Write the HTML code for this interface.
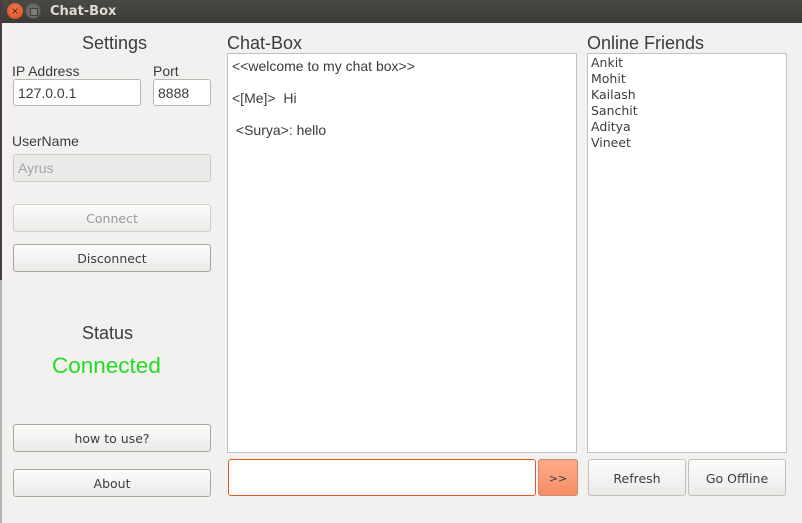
<!DOCTYPE html>
<html><head><style>
*{margin:0;padding:0;box-sizing:border-box}
body{width:802px;height:523px;background:#f2f1f0;position:relative;overflow:hidden;font-family:"Liberation Sans",sans-serif;color:#3c3c3c}
.a{position:absolute}
.strip1{left:0;top:0;width:2px;height:280px;background:#4a3a45}
.strip2{left:0;top:280px;width:2px;height:243px;background:#b5b3b0}
.title{left:2px;top:0;width:800px;height:23px;background:linear-gradient(#4a4944,#3c3b37);color:#dfdbd2;font-weight:bold;font-size:13px;line-height:23px;padding-left:48px;font-family:"DejaVu Sans","Liberation Sans",sans-serif}
.close{left:7px;top:3px;width:16px;height:16px;border-radius:50%;background:radial-gradient(circle at 50% 40%,#f47a50,#d8481f);color:#4a2010;font-size:12px;line-height:16px;text-align:center}
.min{left:25px;top:3px;width:16px;height:16px;border-radius:50%;background:#6b6a66;border:1px solid #55544f}
.min:after{content:"";position:absolute;left:4px;top:4px;width:6px;height:6px;border:1px solid #3f3e3a;background:#807f7a}
.lbl{font-size:14px;color:#3c3c3c}
.hdr{font-size:18px;color:#3c3c3c}
.inp{background:#fff;border:1px solid #b9b6b2;border-radius:3px;font-size:14px;padding-left:4px;line-height:26px}
.btn{border:1px solid #c2bfbb;border-radius:3px;background:linear-gradient(#fcfcfb,#ebeae8);text-align:center;font-family:"DejaVu Sans",sans-serif;font-size:12.5px;color:#3c3c3c}
.box{background:#fff;border:1px solid #c4c1bd}
.ff{font-family:"DejaVu Sans",sans-serif;font-size:12.5px;line-height:16px;color:#3c3c3c}
</style></head><body>
<div class="a strip1"></div><div class="a strip2"></div>
<div class="a title">Chat-Box</div>
<div class="a close">×</div><div class="a min"></div>

<div class="a hdr" style="left:82px;top:33px">Settings</div>
<div class="a lbl" style="left:12px;top:63px">IP Address</div>
<div class="a lbl" style="left:153px;top:63px">Port</div>
<div class="a inp" style="left:13px;top:79px;width:128px;height:27px">127.0.0.1</div>
<div class="a inp" style="left:153px;top:79px;width:58px;height:27px">8888</div>
<div class="a lbl" style="left:12px;top:133px">UserName</div>
<div class="a inp" style="left:13px;top:154px;width:198px;height:28px;background:#ebeae8;color:#a5a5a5;border-color:#cfccc8">Ayrus</div>
<div class="a btn" style="left:13px;top:204px;width:198px;height:28px;line-height:28px;color:#999;border-color:#d2cfcb">Connect</div>
<div class="a btn" style="left:13px;top:244px;width:198px;height:28px;line-height:28px;border-color:#a9a6a2">Disconnect</div>
<div class="a hdr" style="left:82px;top:323px">Status</div>
<div class="a" style="left:52px;top:353px;font-size:22.5px;color:#22dd22">Connected</div>
<div class="a btn" style="left:13px;top:424px;width:198px;height:28px;line-height:28px;border-color:#a9a6a2">how to use?</div>
<div class="a btn" style="left:13px;top:469px;width:198px;height:28px;line-height:28px;border-color:#a9a6a2">About</div>

<div class="a hdr" style="left:227px;top:33px">Chat-Box</div>
<div class="a box" style="left:227px;top:53px;width:350px;height:400px;font-size:14px;padding:4px 0 0 4px;line-height:16px">
<div>&lt;&lt;welcome to my chat box&gt;&gt;</div>
<div style="margin-top:16px">&lt;[Me]&gt;&nbsp; Hi</div>
<div style="margin-top:16px">&nbsp;&lt;Surya&gt;: hello</div>
</div>
<div class="a" style="left:228px;top:459px;width:308px;height:37px;background:#fff;border:1px solid #e05a26;border-radius:3px"></div>
<div class="a btn" style="left:538px;top:459px;width:40px;height:37px;line-height:37px;background:linear-gradient(#ffac88,#f48d66);border-color:#c98a70;font-size:11px">&gt;&gt;</div>

<div class="a hdr" style="left:587px;top:33px">Online Friends</div>
<div class="a box ff" style="left:587px;top:53px;width:200px;height:400px;padding:1px 0 0 3px">Ankit<br>Mohit<br>Kailash<br>Sanchit<br>Aditya<br>Vineet</div>
<div class="a btn" style="left:588px;top:459px;width:98px;height:37px;line-height:37px">Refresh</div>
<div class="a btn" style="left:688px;top:459px;width:98px;height:37px;line-height:37px">Go Offline</div>
</body></html>
